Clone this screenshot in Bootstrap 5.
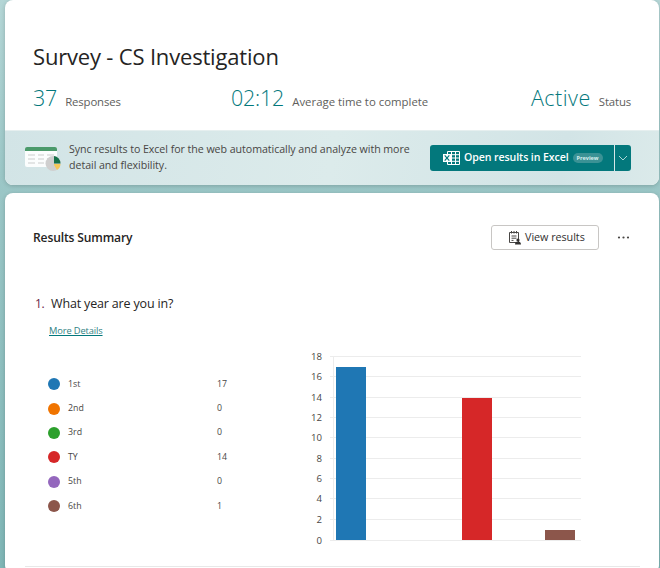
<!DOCTYPE html>
<html lang="en">
<head>
<meta charset="utf-8">
<title>Survey - CS Investigation</title>
<link href="https://cdn.jsdelivr.net/npm/bootstrap@5.3.0/dist/css/bootstrap.min.css" rel="stylesheet">
<style>
html, body { height: 568px; overflow: hidden; }
body { font-family: "Open Sans", "Noto Sans", sans-serif; color: #323130; background: linear-gradient(180deg, #b4d6d6 0%, #9cc7c7 30%, #7fb6b6 100%); padding: 0 1px 0 5px; }
.sheet { border: 0; border-radius: 8px; overflow: hidden; box-shadow: 0 1px 4px rgba(0,0,0,.18); }
.top-area { height: 130px; padding: 43px 28px 0; }
.survey-title { font-size: 22px; line-height: 26px; font-weight: 400; color: #252423; margin: 0 0 16px; letter-spacing: -.18px; }
.stat-row { height: 26px; }
.stat-num { font-size: 21.5px; line-height: 26px; font-weight: 300; color: #03787c; letter-spacing: -.2px; }
.stat-wide { letter-spacing: .5px; }
.stat-lbl { font-size: 11.4px; color: #605e5c; margin-left: 8px; letter-spacing: -.15px; }
.stat-lbl-wide { letter-spacing: 0; }
.stat-first { width: 198px; }
.stat-mid { width: 300px; }
.excel-band { height: 55px; padding: 14px 28px 0 20px; background: linear-gradient(100deg, #d2e4e6, #dcebeb 50%, #d2e4e6 85%, #dbeaea); border-top: 1px solid #e6efef; }
.band-text { font-size: 10.65px; line-height: 16px; color: #484644; width: 351px; margin-left: 8px; letter-spacing: -.05px; margin-top: -4px; }
.excel-btn { width: 184px; height: 26px; margin-left: 10px; background: #03787c; border-radius: 3px 0 0 3px; color: #fff; font-size: 10.6px; font-weight: 600; letter-spacing: -.1px; padding-left: 13px; }
.excel-drop { width: 16px; height: 26px; margin-left: 1px; background: #03787c; border-radius: 0 3px 3px 0; }
.pv-pill { font-size: 5.5px; font-weight: 700; line-height: 10px; background: #3b9295; color: #d8eeee; border-radius: 5px; padding: 0 4px; margin-left: 4px; letter-spacing: 0; }
.result-card { margin-top: 8px; height: 380px; padding: 32px 29px 0 28px; }
.sum-title { font-size: 12.1px; line-height: 24px; font-weight: 600; color: #252423; letter-spacing: -.15px; margin: 0; }
.view-btn { width: 108px; height: 25px; border: 1px solid #c8c6c4; border-radius: 3px; background: #fff; font-size: 10.8px; color: #323130; padding: 0 0 0 16px; letter-spacing: -.05px; }
.dots { margin-left: 18px; width: 13px; }
.q-line { margin-top: 45px; margin-left: 2px; font-size: 12.5px; line-height: 18px; color: #252423; letter-spacing: -.17px; }
.q-no { color: #6b1d47; width: 13px; font-size: 12px; letter-spacing: -.3px; display: inline-block; }
.more-link { display: block; font-size: 9.3px; line-height: 12px; margin: 12px 0 0 16px; color: #2f7f83; text-decoration: underline; text-decoration-color: #03787c; letter-spacing: -.12px; }
.chart-zone { margin-top: 12px; height: 223px; }
.legend-col { width: 272px; padding: 23px 0 0 15px; }
.legend-item { height: 24.4px; font-size: 8.8px; color: #484644; }
.dot-mark { width: 12px; height: 12px; border-radius: 50%; flex: none; margin-right: 8px; }
.legend-name { width: 149px; }
.chart-svg { display: block; margin-left: -2px; }
.chart-svg text { font-family: "Open Sans", sans-serif; font-size: 9.6px; fill: #484644; }
.bottom-rule { border-top: 1px solid #e8e8e8; margin: -6px -10px 0 -8px; }
</style>
</head>
<body>
<div class="card sheet">
  <div class="top-area">
    <h1 class="survey-title">Survey - CS Investigation</h1>
    <div class="d-flex align-items-baseline stat-row">
      <div class="stat-first d-flex align-items-baseline"><span class="stat-num">37</span><span class="stat-lbl">Responses</span></div>
      <div class="stat-mid d-flex align-items-baseline"><span class="stat-num">02:12</span><span class="stat-lbl stat-lbl-wide">Average time to complete</span></div>
      <div class="d-flex align-items-baseline"><span class="stat-num stat-wide">Active</span><span class="stat-lbl">Status</span></div>
    </div>
  </div>
  <div class="excel-band d-flex align-items-start">
    <svg width="36" height="26" viewBox="0 0 36 26" class="flex-none">
      <rect x="0" y="2" width="32" height="20" rx="2" fill="#fbfdfd"/>
      <path d="M0 6V4a2 2 0 0 1 2-2h28a2 2 0 0 1 2 2v2z" fill="#4b9a6b"/>
      <path d="M3 9h7v2H3zM13 9h6v2h-6zM22 9h7v2h-7zM3 13h7v2H3zM13 13h6v2h-6zM22 13h7v2h-7zM3 17h7v2H3zM13 17h6v2h-6z" fill="#e3e5e5"/>
      <circle cx="28" cy="18.5" r="7.5" fill="#cfcfcf"/>
      <path d="M29 11a7.5 7.5 0 0 1 6.5 7.5H29z" fill="#17724a"/>
      <path d="M29 19h6.5a7.5 7.5 0 0 1-3.5 6l-3-5z" fill="#f5c85a"/>
    </svg>
    <div class="band-text">Sync results to Excel for the web automatically and analyze with more detail and flexibility.</div>
    <div class="excel-btn d-flex align-items-center">
      <svg width="17" height="14" viewBox="0 0 17 14" class="me-1">
        <path d="M4.5.5h12v13h-12zM8.5.5v13M12.5.5v13M4.5 3.7h12M4.5 7h12M4.5 10.3h12" fill="none" stroke="#fff" stroke-width="1"/>
        <rect x="0" y="3" width="8" height="8" fill="#fff"/>
        <path d="M1.7 4.4l4.6 5.2M6.3 4.4L1.7 9.6" stroke="#03787c" stroke-width="1.2"/>
      </svg>
      <span>Open results in Excel</span><span class="pv-pill">Preview</span>
    </div>
    <div class="excel-drop d-flex align-items-center justify-content-center">
      <svg width="10" height="6" viewBox="0 0 10 6"><path d="M1 1l4 4 4-4" fill="none" stroke="#bfe0e0" stroke-width=".9"/></svg>
    </div>
  </div>
</div>

<div class="card sheet result-card">
  <div class="d-flex align-items-center">
    <h2 class="sum-title flex-grow-1">Results Summary</h2>
    <button type="button" class="btn view-btn d-flex align-items-center">
      <svg width="13" height="15" viewBox="0 0 13 15" class="me-1">
        <path d="M1.5 2.5h9v10h-9zM3.5 1v2.5M6 1v2.5M8.5 1v2.5M3.5 6h5M3.5 8.2h5M3.5 10.4h2" fill="none" stroke="#484644" stroke-width="1"/>
        <circle cx="10" cy="10" r="1.6" fill="#323130"/>
        <path d="M7 14.5c0-2 1.2-3 3-3s3 1 3 3z" fill="#323130"/>
      </svg>
      <span>View results</span>
    </button>
    <svg class="dots" width="13" height="3" viewBox="0 0 13 3"><circle cx="2" cy="1.5" r="1.1" fill="#484644"/><circle cx="6.5" cy="1.5" r="1.1" fill="#484644"/><circle cx="11" cy="1.5" r="1.1" fill="#484644"/></svg>
  </div>
  <div class="q-line"><span class="q-no">1.</span> What year are you in?</div>
  <a class="more-link" href="#">More Details</a>
  <div class="chart-zone d-flex">
    <div class="legend-col">
      <div class="legend-item d-flex align-items-center"><span class="dot-mark" style="background:#1f77b4"></span><span class="legend-name">1st</span><span>17</span></div>
      <div class="legend-item d-flex align-items-center"><span class="dot-mark" style="background:#f07400"></span><span class="legend-name">2nd</span><span>0</span></div>
      <div class="legend-item d-flex align-items-center"><span class="dot-mark" style="background:#2ca02c"></span><span class="legend-name">3rd</span><span>0</span></div>
      <div class="legend-item d-flex align-items-center"><span class="dot-mark" style="background:#d62728"></span><span class="legend-name">TY</span><span>14</span></div>
      <div class="legend-item d-flex align-items-center"><span class="dot-mark" style="background:#9467bd"></span><span class="legend-name">5th</span><span>0</span></div>
      <div class="legend-item d-flex align-items-center"><span class="dot-mark" style="background:#8c564b"></span><span class="legend-name">6th</span><span>1</span></div>
    </div>
    <svg class="chart-svg" width="290" height="204" viewBox="0 -4 290 204">
      <g stroke="#ececec" stroke-width="1">
        <path d="M27 3.5H278M27 23.5H278M27 44.5H278M27 64.5H278M27 84.5H278M27 105.5H278M27 125.5H278M27 145.5H278M27 166.5H278M27 187.5H278M30.5 3V188"/>
      </g>
      <g text-anchor="end">
        <text x="19" y="7">18</text><text x="19" y="27">16</text><text x="19" y="48">14</text><text x="19" y="68">12</text><text x="19" y="88">10</text><text x="19" y="109">8</text><text x="19" y="129">6</text><text x="19" y="149">4</text><text x="19" y="170">2</text><text x="19" y="191">0</text>
      </g>
      <rect x="33" y="14" width="30" height="173" fill="#1f77b4"/>
      <rect x="159" y="45" width="30" height="142" fill="#d62728"/>
      <rect x="242" y="177" width="30" height="10" fill="#8c564b"/>
    </svg>
  </div>
  <div class="bottom-rule"></div>
</div>
<script src="https://cdn.jsdelivr.net/npm/bootstrap@5.3.0/dist/js/bootstrap.bundle.min.js"></script>
</body>
</html>
